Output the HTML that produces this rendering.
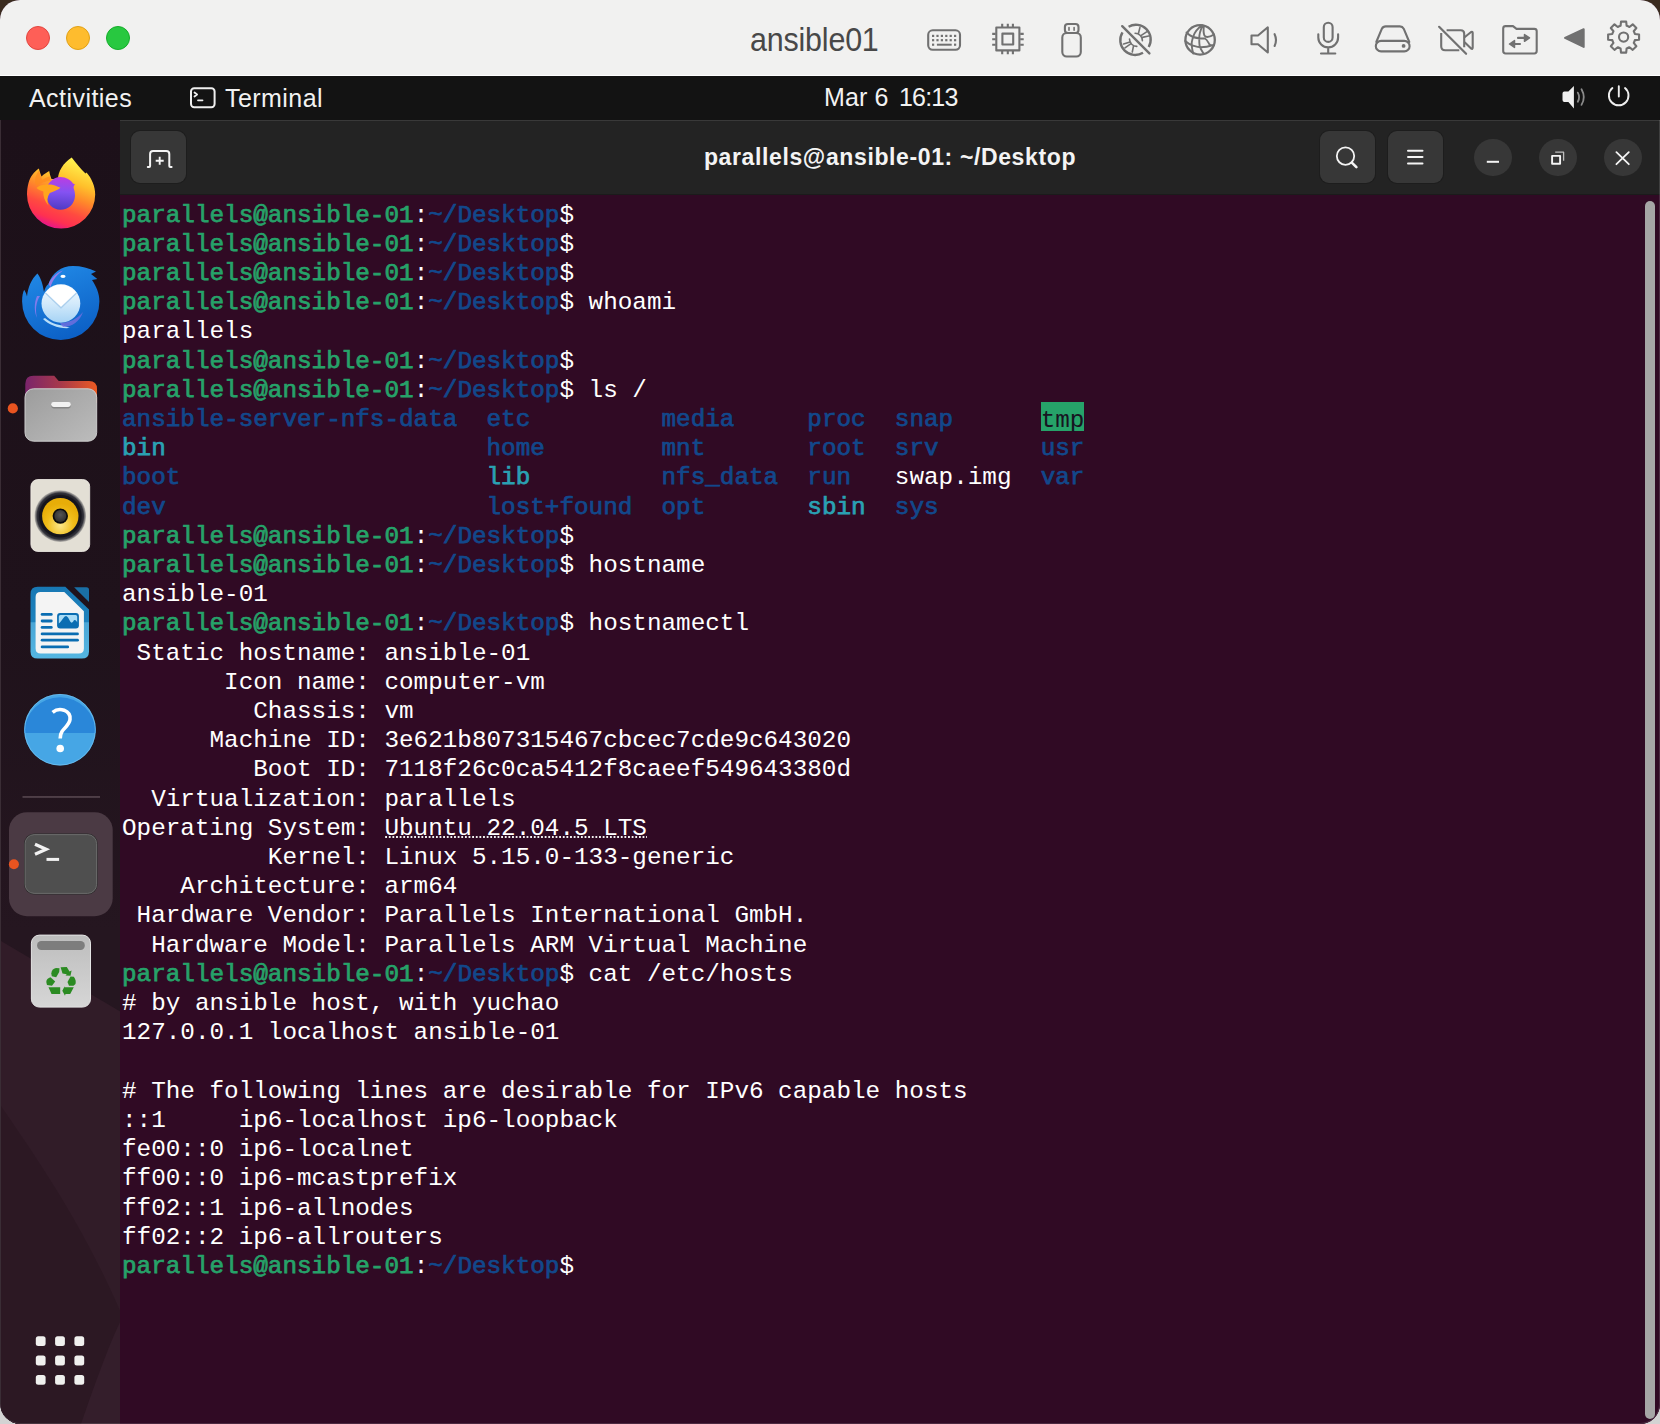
<!DOCTYPE html>
<html><head><meta charset="utf-8">
<style>
*{margin:0;padding:0;box-sizing:border-box}
html,body{width:1660px;height:1424px;overflow:hidden}
body{background:linear-gradient(#3a2b1e 0,#3a2b1e 50%,#d3d3d3 50%,#d3d3d3 100%);font-family:"Liberation Sans",sans-serif;position:relative}
#win{position:absolute;left:0;top:0;width:1660px;height:1424px;border-radius:20px 20px 20px 21px;overflow:hidden;background:#300a24}
#tb{position:absolute;left:0;top:0;width:1660px;height:75px;background:#f1f1f0}
#tbline{position:absolute;left:0;top:75px;width:1660px;height:1px;background:#fff}
.tl{position:absolute;top:26px;width:24px;height:24px;border-radius:50%}
#vmname{position:absolute;left:750px;top:20.5px;font-size:33px;color:#484848;letter-spacing:-0.2px;white-space:nowrap;transform:scaleX(0.922);transform-origin:0 0}
.ic{position:absolute}
#panel{position:absolute;left:0;top:76px;width:1660px;height:44px;background:#131313;color:#f2f2f2;font-size:25px}
.pt{position:absolute;white-space:nowrap;line-height:30px}
#dock{position:absolute;left:0;top:120px;width:120px;height:1304px;background:linear-gradient(#1c1019 0px,#1f121b 500px,#251620 810px);border-left:1px solid #3a2d35}
#term{position:absolute;left:120px;top:120px;width:1540px;height:1304px;background:#300a24}
#hdr{position:absolute;left:0;top:0;width:1540px;height:75px;background:#232323;border-top:1px solid #393939;border-bottom:1px solid #1b1b1b}
.btn{position:absolute;background:#373737;border-radius:9px;box-shadow:0 0 0 1px #1d1d1d}
.cbtn{position:absolute;width:37.5px;height:37.5px;border-radius:50%;background:#373737}
#title{position:absolute;left:0;width:1540px;top:23px;text-align:center;font-weight:bold;font-size:23px;letter-spacing:0.62px;color:#f4f4f4}
pre{position:absolute;left:2px;top:80.6px;font-family:"Liberation Mono",monospace;font-size:24.3px;line-height:29.2px;color:#ffffff}
.g{color:#26a269;-webkit-text-stroke:0.75px #26a269}
.b{color:#12488b;-webkit-text-stroke:0.75px #12488b}
.w{font-weight:bold}
.c{color:#2aa1b3;-webkit-text-stroke:0.75px #2aa1b3}
.ul{background-image:linear-gradient(to right,#f0f0f0 1.8px,transparent 1.8px);background-size:3.64px 1.8px;background-repeat:repeat-x;background-position:1.2px calc(100% - 3.8px)}
.tmp{background:linear-gradient(#26a269 0,#26a269 calc(100% - 2.3px),transparent calc(100% - 2.3px));padding-top:4.5px;color:#171421}
#sb{position:absolute;left:1525px;top:81px;width:10px;height:1218px;border-radius:5px;background:#a6a6a6}
</style></head><body>
<div id="win">
  <div id="tb">
    <div class="tl" style="left:26px;background:#fe5f57;border:1px solid #e2463f"></div>
    <div class="tl" style="left:66px;background:#febc2e;border:1px solid #e1a116"></div>
    <div class="tl" style="left:106px;background:#28c840;border:1px solid #14ae2a"></div>
    <div id="vmname">ansible01</div>
<svg class="ic" style="left:0;top:0" width="1660" height="75" viewBox="0 0 1660 75" fill="none" stroke="#717171" stroke-width="2.1" stroke-linecap="round" stroke-linejoin="round">
<!-- keyboard -->
<rect x="928.2" y="30.3" width="31.8" height="19.5" rx="4.5"/>
<g fill="#717171" stroke="none">
<rect x="932" y="34.8" width="2.2" height="2.2"/><rect x="936.4" y="34.8" width="2.2" height="2.2"/><rect x="940.8" y="34.8" width="2.2" height="2.2"/><rect x="945.2" y="34.8" width="2.2" height="2.2"/><rect x="949.6" y="34.8" width="2.2" height="2.2"/><rect x="954" y="34.8" width="2.2" height="2.2"/>
<rect x="932" y="39.1" width="2.2" height="2.2"/><rect x="936.4" y="39.1" width="2.2" height="2.2"/><rect x="940.8" y="39.1" width="2.2" height="2.2"/><rect x="945.2" y="39.1" width="2.2" height="2.2"/><rect x="949.6" y="39.1" width="2.2" height="2.2"/><rect x="954" y="39.1" width="2.2" height="2.2"/>
<rect x="932" y="43.6" width="2.2" height="2.2"/><rect x="936.9" y="43.7" width="14.8" height="2"/><rect x="954" y="43.6" width="2.2" height="2.2"/>
</g>
<!-- cpu -->
<rect x="996.3" y="27.5" width="23.1" height="22.9"/>
<rect x="1002.4" y="33.6" width="10.8" height="10.9"/>
<path d="M1002.2 23.7v3.5M1007.8 23.7v3.5M1012.9 23.7v3.5M1002.2 50.8v3.5M1007.8 50.8v3.5M1012.9 50.8v3.5M992.2 33.9h3.5M992.2 39.3h3.5M992.2 44.7h3.5M1020.2 33.9h3.5M1020.2 39.3h3.5M1020.2 44.7h3.5" stroke-linecap="butt"/>
<!-- usb -->
<rect x="1064.9" y="24" width="13.6" height="9" rx="3"/>
<rect x="1062.3" y="33" width="18.5" height="23.5" rx="4.5"/>
<path d="M1069 27.5v2.8M1074.1 27.5v2.8" stroke-width="1.6"/>
<!-- aperture crossed -->
<path d="M1128.6 26.7 A14.8 14.8 0 0 1 1148.7 47 M1122.5 32.4 A14.8 14.8 0 0 0 1143 52.7" stroke-width="2.4" stroke-linecap="butt"/>
<path d="M1122.2 26.2 L1149.4 53.4" stroke-width="2.4"/>
<path d="M1135.1 33.3 A7.3 7.3 0 0 1 1142.4 40.8 M1138.5 33.2 L1139.9 27.6 M1141.3 35.3 L1146.6 31.8 M1142.4 37.4 L1148.6 36 M1129.5 39.1 A7.3 7.3 0 0 0 1136.8 46.4 M1129.2 42.2 L1123.6 43.9 M1130.3 44.2 L1125 47.8 M1133.4 46.4 L1132.3 52" stroke-width="1.6"/>
<!-- globe -->
<circle cx="1200.1" cy="39.9" r="14.7" stroke-width="2.3"/>
<path d="M1201.9 25.3 C1197 29 1194.5 33 1193.5 36 C1192 40 1191.5 44 1191.8 46 C1192 49 1192.5 51 1193.2 53.5 M1202.5 25.6 C1200.5 30 1199.2 34 1199.2 38 C1199.2 41 1199.3 44 1199.7 46.5 C1200.5 49 1202 51 1203.5 53.5 M1203.9 25.9 C1203.5 29 1203.4 33 1204.4 35.5 C1206 38 1210 37 1214 34.5 M1186.5 32.5 C1188.5 34.5 1190.5 36 1193 37 C1196 38 1201 38.5 1205 38.5 C1207 39.5 1208 42 1209.5 44.5 C1210.5 45.5 1212 45.5 1214 45 M1185.2 41 C1188 43.5 1191 45 1193 45.6 C1196 46.5 1199 47.2 1201 47.3 C1204 47.2 1208 46.8 1211.5 45.5" stroke-width="1.9"/>
<!-- speaker -->
<path d="M1251.5 35.5 h6.5 l9.8 -8.2 v25.2 l-9.8 -8.2 h-6.5 z" stroke-width="2.1"/>
<path d="M1274.6 34.2 q2.8 5.8 0 11.8" stroke-width="2.1"/>
<!-- mic -->
<rect x="1323.8" y="22.7" width="8.8" height="19.2" rx="4.4"/>
<path d="M1318.3 34.3 v3.2 a9.9 9.9 0 0 0 19.8 0 v-3.2 M1328.2 48 v5 M1321 53.5 h14.3"/>
<!-- drive -->
<path d="M1376.3 42 l5.6 -13.3 q1.2 -2.3 3.8 -2.3 h14.2 q2.6 0 3.8 2.3 l5.6 13.3"/>
<rect x="1375.8" y="40.9" width="33.8" height="10.5" rx="5.25"/>
<circle cx="1403.6" cy="45.9" r="1.9" fill="#717171" stroke="none"/>
<!-- camera off -->
<path d="M1441.2 33 v13.2 q0 4 4 4 h14.1 M1446.6 30.2 h14.1 q3.5 0 3.5 3.5 v13.5" stroke-linecap="butt"/>
<path d="M1464.9 37 l6.2 -5 q1.6 -0.8 1.6 1 v14.6 q0 1.8 -1.6 1 l-6.2 -6"/>
<path d="M1439.1 26.8 L1466.1 53.8" stroke-width="2.2"/>
<!-- folder -->
<path d="M1503.2 28.5 q0 -2.4 2.4 -2.4 h7.4 l3.5 2.8 h17.8 q2.4 0 2.4 2.4 v19.8 q0 2.4 -2.4 2.4 h-28.7 q-2.4 0 -2.4 -2.4 z"/>
<path d="M1518 37.9 h7 M1511 44 h9" stroke-width="2.1"/>
<path d="M1524.5 34.5 l5 3.4 l-5 3.4 z M1514.5 40.6 l-5 3.4 l5 3.4 z" fill="#717171" stroke-width="1.5"/>
<!-- triangle -->
<path d="M1565 37.9 L1583.7 29.2 L1583.7 46.9 Z" fill="#717171" stroke-width="2"/>
<!-- gear -->
<path d="M1620.57 25.80 L1621.01 21.62 L1626.19 21.62 L1626.63 25.80 A11.70 11.70 0 0 1 1629.45 26.97 L1629.45 26.97 L1632.72 24.32 L1636.38 27.98 L1633.73 31.25 A11.70 11.70 0 0 1 1634.90 34.07 L1634.90 34.07 L1639.08 34.51 L1639.08 39.69 L1634.90 40.13 A11.70 11.70 0 0 1 1633.73 42.95 L1633.73 42.95 L1636.38 46.22 L1632.72 49.88 L1629.45 47.23 A11.70 11.70 0 0 1 1626.63 48.40 L1626.63 48.40 L1626.19 52.58 L1621.01 52.58 L1620.57 48.40 A11.70 11.70 0 0 1 1617.75 47.23 L1617.75 47.23 L1614.48 49.88 L1610.82 46.22 L1613.47 42.95 A11.70 11.70 0 0 1 1612.30 40.13 L1612.30 40.13 L1608.12 39.69 L1608.12 34.51 L1612.30 34.07 A11.70 11.70 0 0 1 1613.47 31.25 L1613.47 31.25 L1610.82 27.98 L1614.48 24.32 L1617.75 26.97 A11.70 11.70 0 0 1 1620.57 25.80 Z"/>
<circle cx="1623.6" cy="37.1" r="4.6"/>
</svg>

  </div>
  <div id="tbline"></div>
  <div id="panel">
    <div class="pt" style="left:29px;top:7px;letter-spacing:0.45px">Activities</div>
    <svg class="ic" style="left:0;top:0" width="1660" height="44" viewBox="0 76 1660 44" fill="none" stroke="#efefef" stroke-width="2" stroke-linecap="round" stroke-linejoin="round">
      <rect x="191" y="88.3" width="23.6" height="19" rx="3.2"/>
      <path d="M194.5 92.5 l2.6 2 l-2.6 2" stroke-width="1.8"/>
      <path d="M198 100.3 h4.5" stroke-width="1.8"/>
      <path d="M1562.5 93.5 q0 -1.9 1.9 -1.9 h4 l5.5 -5.7 v22.5 l-5.5 -6.5 h-4 q-1.9 0 -1.9 -1.9 z" fill="#f0f0f0" stroke="none"/>
      <path d="M1577.8 92.6 q2.6 4.6 0 9.2 M1581.5 89.3 q4.6 8.1 0 15.6" stroke="#8a8a8a" stroke-width="1.8"/>
      <path d="M1612.4 88 a9.8 9.8 0 1 0 12.6 0 M1618.8 86.3 v10.2" stroke-width="1.9"/>
    </svg>
    <div class="pt" style="left:225px;top:7px;letter-spacing:0.45px">Terminal</div>
    <div class="pt" style="left:824px;top:6px;letter-spacing:0.1px">Mar 6</div>
    <div class="pt" style="left:899px;top:6px;letter-spacing:-0.8px">16:13</div>
  </div>
  <div id="dock">
    <svg class="ic" style="left:0;top:0" width="120" height="1304" viewBox="0 120 120 1304">
      <defs>
        <linearGradient id="ffring" x1="0.75" y1="0.05" x2="0.4" y2="1">
          <stop offset="0" stop-color="#fff44f"/>
          <stop offset="0.3" stop-color="#ffc02b"/>
          <stop offset="0.5" stop-color="#ff8a2a"/>
          <stop offset="0.72" stop-color="#ff4a40"/>
          <stop offset="0.88" stop-color="#ff3150"/>
          <stop offset="1" stop-color="#e5168a"/>
        </linearGradient>
        <linearGradient id="ffglobe" x1="0.5" y1="0" x2="0.45" y2="1">
          <stop offset="0" stop-color="#bb3de2"/>
          <stop offset="0.45" stop-color="#8552f2"/>
          <stop offset="1" stop-color="#4e3bc4"/>
        </linearGradient>
        <linearGradient id="tbird" x1="0.3" y1="0" x2="0.7" y2="1">
          <stop offset="0" stop-color="#2189e6"/>
          <stop offset="1" stop-color="#0b5ec4"/>
        </linearGradient>
        <linearGradient id="tbenv" x1="0" y1="0" x2="0" y2="1">
          <stop offset="0" stop-color="#f4fafe"/>
          <stop offset="0.5" stop-color="#d3eafb"/>
          <stop offset="1" stop-color="#a6d3f5"/>
        </linearGradient>
        <linearGradient id="ftab" x1="0" y1="0" x2="1" y2="0">
          <stop offset="0" stop-color="#7a246b"/>
          <stop offset="0.5" stop-color="#a8394a"/>
          <stop offset="1" stop-color="#ec5a22"/>
        </linearGradient>
        <linearGradient id="fbody" x1="0" y1="0" x2="1" y2="1">
          <stop offset="0" stop-color="#9c9c9c"/>
          <stop offset="1" stop-color="#bcbcbc"/>
        </linearGradient>
        <radialGradient id="rbcone" cx="0.5" cy="0.75" r="0.6">
          <stop offset="0" stop-color="#fde88a"/>
          <stop offset="0.6" stop-color="#f0bd1a"/>
          <stop offset="1" stop-color="#e7ad08"/>
        </radialGradient>
        <radialGradient id="rbring" cx="0.5" cy="0.5" r="0.5">
          <stop offset="0.8" stop-color="#1d1d26"/>
          <stop offset="0.9" stop-color="#33333b"/>
          <stop offset="1" stop-color="#55555a" stop-opacity="0.3"/>
        </radialGradient>
        <radialGradient id="rbdome" cx="0.5" cy="0.4" r="0.6">
          <stop offset="0" stop-color="#555555"/>
          <stop offset="1" stop-color="#2e2e2e"/>
        </radialGradient>
        <linearGradient id="wrdoc" x1="0" y1="0" x2="0" y2="1">
          <stop offset="0" stop-color="#1878b4"/>
          <stop offset="0.49" stop-color="#1d82bd"/>
          <stop offset="0.5" stop-color="#4aa6d6"/>
          <stop offset="1" stop-color="#54b6e2"/>
        </linearGradient>
        <linearGradient id="trashg" x1="0" y1="0" x2="0" y2="1">
          <stop offset="0" stop-color="#bdbdbd"/>
          <stop offset="1" stop-color="#d6d6d6"/>
        </linearGradient>
      </defs>
      <path d="M0 941 L120 1012 L120 1424 L0 1424 Z" fill="#311c28"/>
      <path d="M0 1106 C30 1150 80 1220 120 1313 L120 1424 L0 1424 Z" fill="#2c1823"/>
      <path d="M80 1424 C95 1380 110 1340 120 1320 L120 1424 Z" fill="#341e2b"/>
      <!-- firefox -->
      <path d="M27.5 183 C29.5 176 33 172 37.9 168.5 C38.5 171 39.5 174 40.5 176.5 C43 174 45.5 172.5 48.2 171 C48.8 174 49.5 176.5 50.5 179 L57 179 C57 172 62 163 70.7 157.5 C75 163 80 169 84.5 173.5 L85.5 172.5 C90.5 178 94.2 186 94.2 194.5 A34.1 34.1 0 0 1 26 194.5 C26 190 26.5 186.5 27.5 183 Z" fill="url(#ffring)"/>
      <path d="M45 193.5 C45 184 51.5 177 59.5 177 C65 177 70 180 72 183.5 C73 184 73.5 184.3 74 184.3 C72 186.5 72.5 188 73.2 190 C74 192 74 195 74 196 C73.5 204 67.5 209.8 59.5 209.8 C51.5 209.8 45 203 45 193.5 Z" fill="url(#ffglobe)"/>
      <path d="M35.5 188 C38 185 44 184 50 184.5 C53 185 56 186.5 59.5 187.8 C56.5 190.5 52 191.5 48.8 193 C46 197 45.8 201.5 47.5 205.5 C43.5 201 42 196 42.3 191.5 C39.5 190.7 37 189.5 35.5 188 Z" fill="#ffa51c"/>
      <path d="M38 170.5 C39 174 40 177 41 180 C44 178 46 177 48.5 176.5 L50 181 C45 181 40 182.5 36 186 C33 183 33.5 176 38 170.5 Z" fill="#ff8a1f" opacity="0.7"/>
      <!-- thunderbird -->
      <path d="M36.4 273.5 C40 278 42 285 43 292 C44 288 45.5 285.5 47.5 284 C51 273 60 266 72 266 C80 266 88 268 95 271.5 L90 274 L96.3 279 L91 280 C95 286 98.4 293 98.4 301.4 A38.6 38.6 0 0 1 21.1 301.4 C21.1 296 22 292 23.2 289.8 C24.5 292 25.5 294 26 296.5 C27 287 30.5 279 36.4 273.5 Z" fill="url(#tbird)"/>
      <path d="M47.5 284 C50 278 55 273 62 270.5 C56 275 52 279 49.5 287 Z" fill="#a37bea" opacity="0.9"/>
      <path d="M36 296 C33 303 33 312 36 318 C34 310 35 302 39 296 Z" fill="#9b7cf0" opacity="0.8"/>
      <ellipse cx="62" cy="276.3" rx="2.6" ry="1.6" fill="#ffffff"/>
      <ellipse cx="59.9" cy="303.5" rx="19.4" ry="19.2" fill="url(#tbenv)"/>
      <path d="M44.5 293 L60 307.8 L75.5 293 C72 288 66 285 60 285 C54 285 48 288 44.5 293 Z" fill="#ffffff"/>
      <path d="M44.5 293 L60 307.8 L75.5 293" fill="none" stroke="#9cc6e8" stroke-width="1.2" opacity="0.8"/>
      <path d="M44 318 C50 323 56 325 62 325.5 L69 328 C58 329 48 325 42 319 Z" fill="#b9def8"/>
      <path d="M59 323 C68 323 76 319 82 312 C79 321 71 327 62 327 Z" fill="#7b6fe0" opacity="0.75"/>
      <!-- files -->
      <path d="M24.3 384 q0 -8.2 8.2 -8.2 h20.7 l4.5 5.2 h30.3 q8 0 8 8 v14 h-71.7 z" fill="url(#ftab)"/>
      <rect x="24" y="388.8" width="71.7" height="52.4" rx="8.5" fill="url(#fbody)" stroke="#cdcdcd" stroke-width="1"/>
      <rect x="50.2" y="403.6" width="19.6" height="4.8" rx="2.4" fill="#6e6e6e" opacity="0.6"/>
      <rect x="50.2" y="402" width="19.6" height="4.9" rx="2.45" fill="#f2f2f2"/>
      <circle cx="11.8" cy="408.4" r="5.1" fill="#e95420"/>
      <!-- rhythmbox -->
      <rect x="29.9" y="479.5" width="58.8" height="72" rx="7" fill="#e3dfd5" stroke="#f2efe8" stroke-width="0.8"/>
      <circle cx="59.3" cy="516.1" r="25.8" fill="url(#rbring)"/>
      <circle cx="59.3" cy="516.1" r="21.2" fill="#15151d"/>
      <circle cx="59.3" cy="516.1" r="18.2" fill="url(#rbcone)"/>
      <circle cx="59.3" cy="516.1" r="7.7" fill="#0c0c0c"/>
      <circle cx="59.3" cy="516.1" r="6" fill="url(#rbdome)"/>
      <!-- writer -->
      <g transform="translate(-1.2 0)">
      <path d="M30.7 594 q0 -7.2 7.2 -7.2 h27.6 l23.7 22.8 v41.8 q0 7.2 -7.2 7.2 h-44.1 q-7.2 0 -7.2 -7.2 z" fill="url(#wrdoc)"/>
      <path d="M35.8 597 q0 -5.1 5.1 -5.1 h23.6 l19.6 19.3 v37.2 q0 5.1 -5.1 5.1 h-38.1 q-5.1 0 -5.1 -5.1 z" fill="#f4f4f4"/>
      <path d="M74.3 587.2 h12.3 q2.6 0 2.6 2.6 v12.2 z" fill="#1a6fa5"/>
      <g fill="#0a6db2">
        <rect x="40.9" y="613" width="12" height="2.8" rx="1.4"/>
        <rect x="40.9" y="619.6" width="12" height="2.8" rx="1.4"/>
        <rect x="40.9" y="626" width="12" height="2.8" rx="1.4"/>
        <rect x="40.9" y="632.5" width="38.2" height="2.8" rx="1.4"/>
        <rect x="40.9" y="638.8" width="38.2" height="2.8" rx="1.4"/>
        <rect x="40.9" y="645.5" width="28.4" height="2.8" rx="1.4"/>
      </g>
      <rect x="57.3" y="613.1" width="21.8" height="15.5" rx="3" fill="#0a6db2"/>
      <path d="M59 616.5 q0 -1.6 1.6 -1.6 h15.2 q1.6 0 1.6 1.6 v6 c-1.5 -3 -3 -3 -4 -1 c-1 1.5 -2 1.5 -3 0 c-1.5 -3 -2.5 -5 -4 -5.5 c-2.5 0 -4 5 -7.4 7.5 z" fill="#a9dcf6"/>
      </g>
      <!-- help -->
      <g transform="translate(-1 0)">
      <circle cx="60" cy="729.7" r="35.8" fill="#46a6e5"/>
      <path d="M24.2 733 A35.8 35.8 0 0 1 95.8 733 Z" fill="#2a87d9"/>
      <circle cx="60" cy="729.7" r="35.3" fill="none" stroke="#7cc6f2" stroke-width="1" opacity="0.6"/>
      <path d="M52.6 712.3 C56 709.5 60.5 709 64 710.2 C68.5 712 70.5 715.5 70 719.5 C69.5 724 65 727.5 62 731.5 C60.7 733.5 60.2 736 60.2 738.5" fill="none" stroke="#ffffff" stroke-width="3.6"/>
      <circle cx="60.2" cy="748.5" r="3.8" fill="#ffffff"/>
      </g>
      <!-- separator -->
      <rect x="21.5" y="796.2" width="77.5" height="1.5" fill="#5b4a53"/>
      <!-- active terminal -->
      <rect x="8" y="812.2" width="103.7" height="104" rx="18" fill="#4b3a44"/>
      <circle cx="12.9" cy="864.2" r="5" fill="#e95420"/>
      <rect x="23.1" y="833.6" width="73.5" height="60.8" rx="10" fill="#2b2b2b"/>
      <rect x="24.1" y="834.6" width="71.5" height="58.8" rx="9" fill="#4f4f4f" stroke="#767676" stroke-width="0.8"/>
      <path d="M34 844.2 L45.2 849.2 L34 854.2" fill="none" stroke="#f2f2f2" stroke-width="3.2" stroke-linejoin="miter"/>
      <rect x="45.5" y="857.9" width="12.6" height="3" fill="#f2f2f2"/>
      <!-- trash -->
      <rect x="30.4" y="935.1" width="59.1" height="72" rx="8" fill="url(#trashg)" stroke="#e4e4e4" stroke-width="1"/>
      <rect x="36.1" y="941.1" width="47.7" height="8.9" rx="4.2" fill="#7d7d7d"/>
      <g fill="#2b8b22">
        <path d="M50.3 973.5 C50.5 970.5 52 968.5 55 968 L58.5 968.3 L58.2 972 L55.2 977.3 L50.8 976.2 Z"/>
        <path d="M59.6 967.2 L65.8 967 L68.5 971.5 L70.6 970.5 L69.5 975.8 L64.5 975.5 L65.8 974.3 L61.5 973.5 Z"/>
        <path d="M45.3 982 C45.3 979.5 47 977.8 49.5 977.2 L54.2 981.5 L51 985.8 L46 985 Z"/>
        <path d="M66.5 982 L69.5 976.4 L72.8 976.8 C74.5 979 75.2 981.5 74.5 984 L72.5 985.8 L68 985.8 Z"/>
        <path d="M47.5 987.2 L59.2 987.2 L59.2 993.9 L50.5 993.9 Z"/>
        <path d="M63.5 987.2 L72.8 987.2 L69.2 993.9 L64.5 993.9 L64 995.8 L61.3 990.8 L63.8 986 Z"/>
      </g>
      <!-- app grid -->
      <g fill="#f0f0ee">
        <rect x="34.8" y="1336.2" width="9.8" height="9.8" rx="2.5"/><rect x="54.1" y="1336.2" width="9.8" height="9.8" rx="2.5"/><rect x="73.4" y="1336.2" width="9.8" height="9.8" rx="2.5"/>
        <rect x="34.8" y="1355.6" width="9.8" height="9.8" rx="2.5"/><rect x="54.1" y="1355.6" width="9.8" height="9.8" rx="2.5"/><rect x="73.4" y="1355.6" width="9.8" height="9.8" rx="2.5"/>
        <rect x="34.8" y="1375" width="9.8" height="9.8" rx="2.5"/><rect x="54.1" y="1375" width="9.8" height="9.8" rx="2.5"/><rect x="73.4" y="1375" width="9.8" height="9.8" rx="2.5"/>
      </g>
    </svg>
  </div>
  <div id="term">
    <div id="hdr">
      <div class="btn" style="left:11px;top:10px;width:55px;height:52px"></div>
      <div id="title">parallels@ansible-01: ~/Desktop</div>
      <div class="btn" style="left:1199.5px;top:10px;width:55px;height:52px"></div>
      <div class="btn" style="left:1267.5px;top:10px;width:55px;height:52px"></div>
      <div class="cbtn" style="left:1354px;top:17.5px"></div>
      <div class="cbtn" style="left:1419px;top:17.5px"></div>
      <div class="cbtn" style="left:1484px;top:17.5px"></div>
      <svg class="ic" style="left:0;top:0" width="1540" height="75" viewBox="120 120 1540 75" fill="none" stroke="#f4f4f4" stroke-width="2" stroke-linecap="round" stroke-linejoin="round">
        <path d="M147.8 166.1 h1.3 q1 0 1 -1 v-12.2 q0 -3 3 -3 h13.2 q3 0 3 3 v12.2 q0 1 1 1 h1.3"/>
        <path d="M159.7 155.7 v8 M155.7 159.7 h8" stroke-width="1.9" stroke-linecap="butt"/>
        <circle cx="1345.5" cy="155.1" r="8.7" stroke-width="1.8"/>
        <path d="M1351.8 161.6 l4.6 4.6" stroke-width="2.6"/>
        <path d="M1408 149.8 h14.5 M1408 156.1 h14.5 M1408 162.6 h14.5" stroke-width="2"/>
        <path d="M1486.8 160.8 h12.2" stroke-width="2" stroke-linecap="butt"/>
        <rect x="1552.1" y="154.9" width="8" height="7.8" stroke-width="1.9"/>
        <path d="M1555.2 151.2 h8.4 v8.6" stroke="#bdbdbd" stroke-width="1.3" stroke-linecap="butt"/>
        <path d="M1616.4 151.2 l12.4 12 M1628.8 151.2 l-12.4 12" stroke-width="1.8"/>
      </svg>
    </div>
<pre><span class="g">parallels@ansible-01</span>:<span class="b">~/Desktop</span>$
<span class="g">parallels@ansible-01</span>:<span class="b">~/Desktop</span>$
<span class="g">parallels@ansible-01</span>:<span class="b">~/Desktop</span>$
<span class="g">parallels@ansible-01</span>:<span class="b">~/Desktop</span>$ whoami
parallels
<span class="g">parallels@ansible-01</span>:<span class="b">~/Desktop</span>$
<span class="g">parallels@ansible-01</span>:<span class="b">~/Desktop</span>$ ls /
<span class="b">ansible-server-nfs-data</span>  <span class="b">etc</span>         <span class="b">media</span>     <span class="b">proc</span>  <span class="b">snap</span>      <span class="tmp">tmp</span>
<span class="c">bin</span>                      <span class="b">home</span>        <span class="b">mnt</span>       <span class="b">root</span>  <span class="b">srv</span>       <span class="b">usr</span>
<span class="b">boot</span>                     <span class="c">lib</span>         <span class="b">nfs_data</span>  <span class="b">run</span>   swap.img  <span class="b">var</span>
<span class="b">dev</span>                      <span class="b">lost+found</span>  <span class="b">opt</span>       <span class="c">sbin</span>  <span class="b">sys</span>
<span class="g">parallels@ansible-01</span>:<span class="b">~/Desktop</span>$
<span class="g">parallels@ansible-01</span>:<span class="b">~/Desktop</span>$ hostname
ansible-01
<span class="g">parallels@ansible-01</span>:<span class="b">~/Desktop</span>$ hostnamectl
 Static hostname: ansible-01
       Icon name: computer-vm
         Chassis: vm
      Machine ID: 3e621b807315467cbcec7cde9c643020
         Boot ID: 7118f26c0ca5412f8caeef549643380d
  Virtualization: parallels
Operating System: <span class="ul">Ubuntu 22.04.5 LTS</span>
          Kernel: Linux 5.15.0-133-generic
    Architecture: arm64
 Hardware Vendor: Parallels International GmbH.
  Hardware Model: Parallels ARM Virtual Machine
<span class="g">parallels@ansible-01</span>:<span class="b">~/Desktop</span>$ cat /etc/hosts
# by ansible host, with yuchao
127.0.0.1 localhost ansible-01

# The following lines are desirable for IPv6 capable hosts
::1     ip6-localhost ip6-loopback
fe00::0 ip6-localnet
ff00::0 ip6-mcastprefix
ff02::1 ip6-allnodes
ff02::2 ip6-allrouters
<span class="g">parallels@ansible-01</span>:<span class="b">~/Desktop</span>$
</pre>
    <div id="sb"></div>
  </div>
  <div style="position:absolute;left:0;top:120px;width:1660px;height:1304px;border-right:1px solid rgba(255,255,255,0.13);border-bottom:1px solid rgba(255,255,255,0.13);border-radius:0 0 20px 21px;pointer-events:none"></div>
</div>
</body></html>
